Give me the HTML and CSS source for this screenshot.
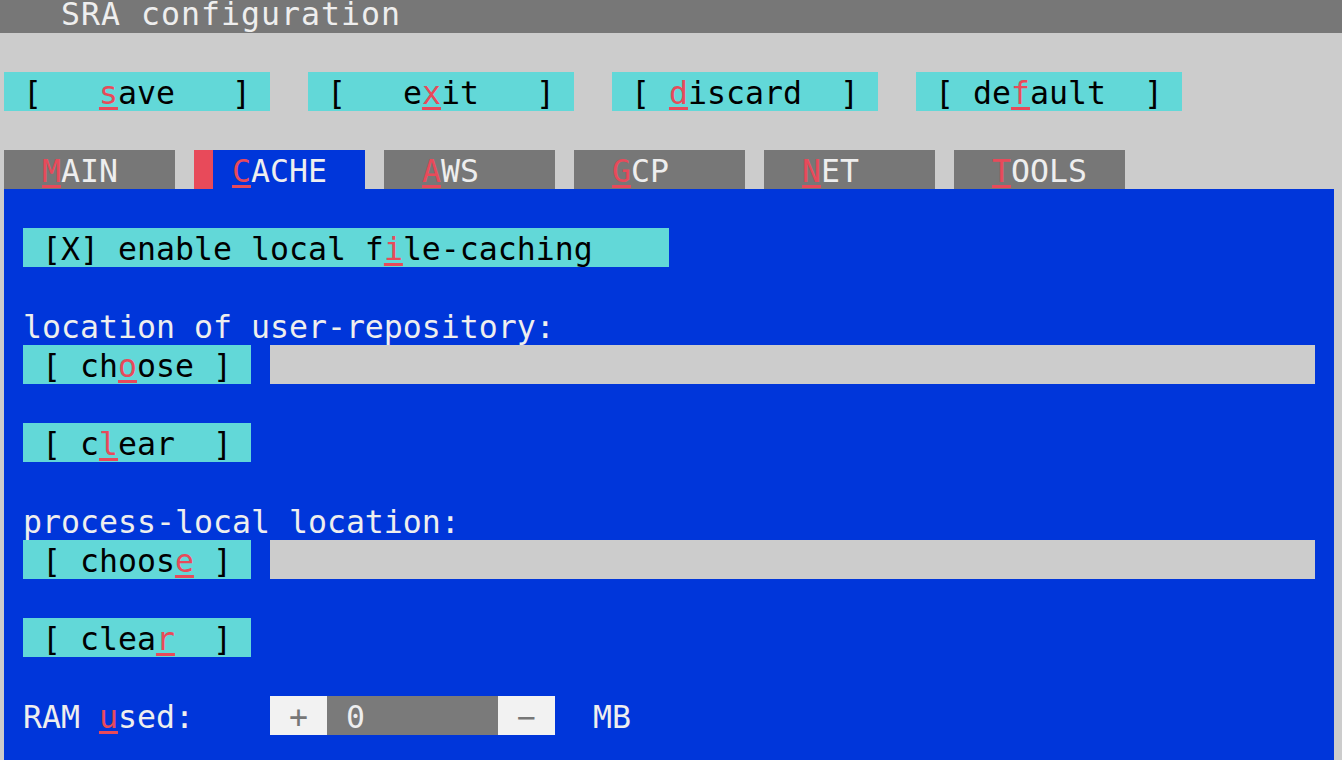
FILE: index.html
```html
<!DOCTYPE html>
<html>
<head>
<meta charset="utf-8">
<link rel="stylesheet" href="styles.css">
</head>
<body>
<div class="title"><div class="title-text">SRA configuration</div></div>
<div class="main">
  <div class="row"></div>
  <div class="row buttons">
    <div class="btn"> [   <span class="hk">s</span>ave   ] </div>
    <div class="btn"> [   e<span class="hk">x</span>it   ] </div>
    <div class="btn"> [ <span class="hk">d</span>iscard  ] </div>
    <div class="btn"> [ de<span class="hk">f</span>ault  ] </div>
  </div>
  <div class="row"></div>
  <div class="row tabs">
    <div class="tab"><span class="hk">M</span>AIN</div>
    <div class="tab active"><span class="tab-mark"></span><span class="tab-label"><span class="hk">C</span>ACHE</span></div>
    <div class="tab"><span class="hk">A</span>WS</div>
    <div class="tab"><span class="hk">G</span>CP</div>
    <div class="tab"><span class="hk">N</span>ET</div>
    <div class="tab"><span class="hk">T</span>OOLS</div>
  </div>
  <div class="panel">
    <div class="row"></div>
    <div class="row"><div class="check"> [X] enable local f<span class="hk">i</span>le-caching</div></div>
    <div class="row"></div>
    <div class="row label">location of user-repository:</div>
    <div class="row line">
      <div class="sbtn"> [ ch<span class="hk">o</span>ose ] </div>
      <div class="field"></div>
    </div>
    <div class="row"></div>
    <div class="row line"><div class="sbtn"> [ c<span class="hk">l</span>ear  ] </div></div>
    <div class="row"></div>
    <div class="row label">process-local location:</div>
    <div class="row line">
      <div class="sbtn"> [ choos<span class="hk">e</span> ] </div>
      <div class="field"></div>
    </div>
    <div class="row"></div>
    <div class="row line"><div class="sbtn"> [ clea<span class="hk">r</span>  ] </div></div>
    <div class="row"></div>
    <div class="row line">
      <div class="ram-label">RAM <span class="hk">u</span>sed:</div>
      <div class="spin">+</div>
      <div class="num"> 0</div>
      <div class="spin">−</div>
      <div class="unit">MB</div>
    </div>
    <div class="row"></div>
  </div>
</div>
</body>
</html>
```

FILE: styles.css
```css
html, body {
  margin: 0;
  padding: 0;
}
body {
  background: #cccccc;
  font-family: "DejaVu Sans Mono", monospace;
  font-size: 31.56px;
  line-height: 42px;
  overflow: hidden;
  height: 760px;
}
.title {
  height: 33px;
  background: #777777;
  color: #eeeeee;
}
.title-text {
  padding-left: 61px;
  line-height: 29px;
  letter-spacing: 1px;
  white-space: pre;
}
.main {
  padding-left: 4px;
}
.row {
  height: 39px;
  white-space: pre;
}
.buttons {
  display: flex;
  gap: 38px;
}
.btn {
  width: 266px;
  height: 39px;
  background: #62d8d8;
  color: #000000;
  white-space: pre;
}
.hk {
  color: #e84a5a;
  text-decoration: underline;
  text-decoration-thickness: 3px;
  text-underline-offset: 3px;
}
.tabs {
  display: flex;
  gap: 19px;
}
.tab {
  width: 171px;
  height: 39px;
  box-sizing: border-box;
  padding-left: 38px;
  background: #777777;
  color: #eeeeee;
  white-space: pre;
}
.tab.active {
  display: flex;
  padding-left: 0;
  background: #0036da;
}
.tab-mark {
  width: 19px;
  height: 39px;
  background: #e84a5a;
}
.tab-label {
  padding-left: 19px;
}
.panel {
  width: 1330px;
  height: 580px;
  background: #0036da;
  color: #eeeeee;
  padding-left: 19px;
  box-sizing: border-box;
}
.check {
  width: 646px;
  height: 39px;
  background: #62d8d8;
  color: #000000;
}
.line {
  display: flex;
}
.sbtn {
  width: 228px;
  height: 39px;
  background: #62d8d8;
  color: #000000;
  margin-right: 19px;
}
.field {
  width: 1045px;
  height: 39px;
  background: #cccccc;
}
.ram-label {
  width: 247px;
}
.spin {
  width: 57px;
  height: 39px;
  background: #f2f2f2;
  color: #777777;
  text-align: center;
}
.num {
  width: 171px;
  height: 39px;
  background: #7a7a7a;
  color: #eeeeee;
}
.unit {
  margin-left: 38px;
}
```
